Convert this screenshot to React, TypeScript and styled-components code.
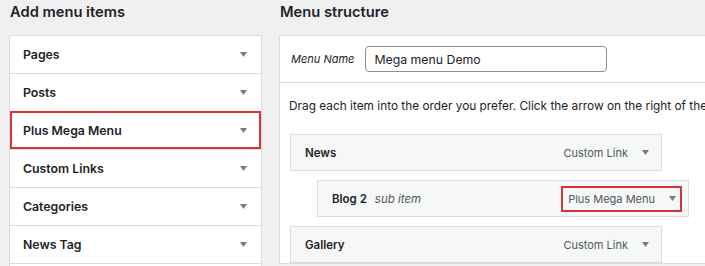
import styled, { createGlobalStyle } from "styled-components";

const GlobalStyle = createGlobalStyle`
	html, body {
		margin: 0;
		padding: 0;
		background: #f0f0f1;
		overflow: hidden;
	}
	body {
		font-family: Inter, "Liberation Sans", sans-serif;
		color: #1d2327;
	}
`;

const sources = ["Pages", "Posts", "Plus Mega Menu", "Custom Links", "Categories", "News Tag", ""];

const menuItems = [
	{ title: "News", type: "Custom Link", depth: 0 },
	{ title: "Blog 2", sub: "sub item", type: "Plus Mega Menu", depth: 1, marked: true },
	{ title: "Gallery", type: "Custom Link", depth: 0 },
];

const Arrow = () => (
	<svg width="7" height="5" viewBox="0 0 7 5">
		<path d="M0 0 H7 L3.5 5 Z" fill="#787c82" />
	</svg>
);

const App = () => {
	return (
		<Page>
			<GlobalStyle />
			<Sidebar>
				<Heading>Add menu items</Heading>
				<Accordion>
					{sources.map((name, i) => (
						<Section key={i} $marked={name === "Plus Mega Menu"}>
							<SectionTitle>{name}</SectionTitle>
							{name && <Arrow />}
						</Section>
					))}
				</Accordion>
			</Sidebar>

			<Main>
				<Heading>Menu structure</Heading>
				<MenuPanel>
					<MenuHeader>
						<NameLabel>Menu Name</NameLabel>
						<NameInput defaultValue="Mega menu Demo" />
					</MenuHeader>
					<MenuBody>
						<Instructions>
							Drag each item into the order you prefer. Click the arrow on the right of the item to reveal additional configuration options.
						</Instructions>
						<ItemList>
							{menuItems.map((item) => (
								<Item key={item.title} $depth={item.depth}>
									<ItemTitle>
										{item.title}
										{item.sub && <SubLabel>{item.sub}</SubLabel>}
									</ItemTitle>
									<ItemControls $marked={item.marked}>
										<ItemType>{item.type}</ItemType>
										<Arrow />
									</ItemControls>
								</Item>
							))}
						</ItemList>
					</MenuBody>
				</MenuPanel>
			</Main>
		</Page>
	);
};

const Page = styled.div`
	display: flex;
	align-items: flex-start;
	gap: 17px;
	padding-left: 9px;
	width: 1000px;
	height: 266px;
`;

const Sidebar = styled.div`
	width: 253px;
	flex-shrink: 0;
`;

const Main = styled.div`
	width: 520px;
	flex-shrink: 0;
`;

const Heading = styled.h2`
	margin: 0;
	padding-left: 1px;
	height: 35px;
	line-height: 24px;
	font-size: 14.7px;
	font-weight: 600;
`;

const Accordion = styled.div`
	background: #fff;
	border: 1px solid #dcdcde;
`;

const Section = styled.div<{ $marked?: boolean }>`
	display: flex;
	align-items: center;
	justify-content: space-between;
	height: 38px;
	padding: 0 14px 0 13px;
	border-top: 1px solid #dcdcde;
	box-sizing: border-box;
	outline: ${(p) => (p.$marked ? "2px solid #d63638" : "none")};
	outline-offset: -2px;

	&:first-child {
		border-top: none;
		height: 37px;
	}
`;

const SectionTitle = styled.span`
	font-size: 12.3px;
	font-weight: 600;
`;

const MenuPanel = styled.div`
	background: #fff;
	border: 1px solid #dcdcde;
	border-right: none;
`;

const MenuHeader = styled.div`
	display: flex;
	align-items: center;
	gap: 11px;
	height: 46px;
	padding-left: 11px;
	border-bottom: 1px solid #dcdcde;
`;

const NameLabel = styled.label`
	font-size: 11px;
	font-style: italic;
`;

const NameInput = styled.input`
	width: 242px;
	height: 26px;
	box-sizing: border-box;
	padding: 0 8px;
	border: 1px solid #8c8f94;
	border-radius: 4px;
	font-family: inherit;
	font-size: 12.3px;
	color: #1d2327;
	background: #fff;
`;

const MenuBody = styled.div`
	padding: 14px 10px 0 9px;
`;

const Instructions = styled.p`
	margin: 0;
	font-size: 11.85px;
	line-height: 18px;
	white-space: nowrap;
`;

const ItemList = styled.div`
	display: flex;
	flex-direction: column;
	gap: 9px;
	margin-top: 19px;
`;

const Item = styled.div<{ $depth: number }>`
	display: flex;
	align-items: center;
	justify-content: space-between;
	width: 372px;
	height: 37px;
	box-sizing: border-box;
	margin-left: ${(p) => 1 + p.$depth * 27}px;
	padding: 0 12px 0 14px;
	background: #f6f7f7;
	border: 1px solid #dcdcde;
`;

const ItemTitle = styled.span`
	font-size: 11.5px;
	font-weight: 600;
`;

const SubLabel = styled.span`
	margin-left: 8px;
	font-weight: 400;
	font-style: italic;
	color: #50575e;
`;

const ItemControls = styled.span<{ $marked?: boolean }>`
	display: flex;
	align-items: center;
	gap: 14px;
	height: 26px;
	padding: ${(p) => (p.$marked ? "0 4px 0 5px" : "0")};
	margin-right: ${(p) => (p.$marked ? "-6px" : "0")};
	border: ${(p) => (p.$marked ? "2px solid #d63638" : "none")};
	box-sizing: border-box;
`;

const ItemType = styled.span`
	font-size: 11px;
	color: #50575e;
`;

export default App;
